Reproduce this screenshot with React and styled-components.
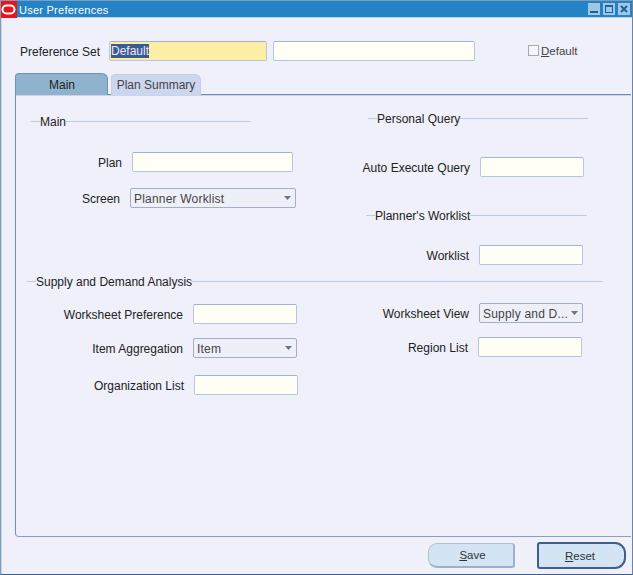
import React from "react";
import styled, { createGlobalStyle } from "styled-components";

const Global = createGlobalStyle`
  html, body { margin: 0; padding: 0; background: #eff0f9; }
  * { box-sizing: border-box; }
`;

const Window = styled.div`
  width: 633px;
  height: 575px;
  display: flex;
  flex-direction: column;
  background: #eff0f9;
  border-top: 1px solid #7f9db9;
  border-left: 1px solid #7f9db9;
  border-right: 1px solid #6f83a3;
  border-bottom: 1px solid #3f5f8a;
  box-shadow: inset 1px 0 #c6d6ec;
  font-family: "Liberation Sans", Arial, sans-serif;
  font-size: 12px;
  line-height: 14px;
  color: #222;
  overflow: hidden;
`;

const TitleBar = styled.div`
  height: 17px;
  margin: 0 -1px;
  background: #2582c4;
  display: flex;
  align-items: center;
  color: #fff;
  border-bottom: 1px solid #bcd4ee;
`;

const Logo = styled.svg`
  width: 17px;
  height: 17px;
  flex: none;
`;

const TitleText = styled.span`
  margin-left: 2px;
  padding-top: 1px;
  flex: 1;
  font-size: 11px;
  letter-spacing: 0.25px;
`;

const WinButtons = styled.div`
  display: flex;
  gap: 3px;
  margin-right: 3px;
`;

const WinButton = styled.svg`
  width: 12px;
  height: 12px;
`;

const PrefRow = styled.div`
  display: flex;
  align-items: center;
  height: 20px;
  margin-top: 23px;
  padding-left: 19px;
`;

const PrefLabel = styled.label`
  width: 79px;
  margin-right: 10px;
  padding-top: 2px;
  white-space: nowrap;
`;

const fieldBox = `
  height: 20px;
  border: 1px solid #b4c6e2;
  border-top-color: #9fb3d2;
  border-radius: 2px;
  outline: none;
  padding: 0 1px;
`;

const PrefField = styled.div`
  ${fieldBox}
  width: ${(p) => p.$w}px;
  background: ${(p) => (p.$required ? "#fdeea5" : "#fffff6")};
  margin-right: 6px;
  display: flex;
  align-items: center;
`;

const Selected = styled.span`
  background: #3c5a92;
  color: #e8ecf8;
`;

const CheckWrap = styled.div`
  display: flex;
  align-items: center;
  margin-left: 47px;
  font-size: 11.5px;
  color: #444;
`;

const CheckBox = styled.span`
  width: 11px;
  height: 11px;
  border: 1px solid #a9a9a9;
  background: #f5f6fb;
  margin-right: 2px;
  margin-top: -2px;
`;

const Tabs = styled.div`
  display: flex;
  gap: 3px;
  margin: 12px 0 0 14px;
  height: 22px;
  position: relative;
  z-index: 1;
`;

const Tab = styled.div`
  width: ${(p) => p.$w}px;
  height: ${(p) => (p.$active ? 22 : 21)}px;
  margin-top: ${(p) => (p.$active ? 0 : 1)}px;
  padding-left: ${(p) => (p.$active ? 1 : 0)}px;
  display: flex;
  align-items: center;
  justify-content: center;
  background: ${(p) => (p.$active ? "#8fb3cd" : "#ccd6ee")};
  border: 1px solid ${(p) => (p.$active ? "#6f93b8" : "#c3cfe9")};
  border-bottom: none;
  border-radius: 4px 6px 0 0;
  color: ${(p) => (p.$active ? "#222" : "#444")};
`;

const Panel = styled.div`
  margin: -1px 0 0 14px;
  width: 616px;
  height: 443px;
  border-left: 1px solid #6f8fb8;
  border-top: 1px solid #6f8fb8;
  border-bottom: 1px solid #8a9fbd;
  border-radius: 0 0 0 4px;
  box-shadow: inset 0 1px #c9d5ea;
`;

const Columns = styled.div`
  display: flex;
`;

const Column = styled.div`
  width: ${(p) => p.$w}px;
  flex: none;
`;

const Heading = styled.div`
  display: flex;
  align-items: center;
  height: 14px;
  width: ${(p) => p.$w}px;
  margin-left: ${(p) => p.$x}px;
  margin-top: ${(p) => p.$top}px;
  &::before, &::after {
    content: "";
    height: 1px;
    background: #bccbe4;
  }
  &::before { width: 9px; }
  &::after { flex: 1; }
`;

const HeadingText = styled.span`
  padding-top: 2px;
`;

const Row = styled.div`
  display: flex;
  align-items: center;
  height: 20px;
  margin-top: ${(p) => p.$top}px;
`;

const RowLabel = styled.label`
  width: ${(p) => p.$end}px;
  margin-right: 10px;
  padding-top: 2px;
  text-align: right;
  white-space: nowrap;
  flex: none;
`;

const Input = styled.div`
  ${fieldBox}
  width: ${(p) => p.$w}px;
  background: #fffff6;
`;

const Select = styled.div`
  ${fieldBox}
  width: ${(p) => p.$w}px;
  border-color: #a3aec4;
  background: #eef0f8;
  display: flex;
  align-items: center;
  padding: 0 3px;
  color: #444;
  justify-content: space-between;
`;

const SelectText = styled.span`
  padding-top: 2px;
  letter-spacing: 0.2px;
`;

const Caret = styled.svg`
  width: 7px;
  height: 4px;
  margin-right: 1px;
  flex: none;
`;

const Footer = styled.div`
  display: flex;
  justify-content: flex-end;
  align-items: center;
  flex: 1;
  padding-right: 6px;
`;

const Button = styled.div`
  display: flex;
  align-items: center;
  justify-content: center;
  width: ${(p) => (p.$default ? 89 : 87)}px;
  height: ${(p) => (p.$default ? 27 : 25)}px;
  margin-left: 22px;
  padding: ${(p) => (p.$default ? "0 3px 0 0" : "0 0 0 3px")};
  background: #d3e5f5;
  border-style: solid;
  border-width: ${(p) => (p.$default ? "2px" : "1px 2px 2px 1px")};
  border-color: ${(p) => (p.$default ? "#3f5f8a" : "#b3c0cc #9fb1c4 #9fb1c4 #b3c0cc")};
  border-radius: ${(p) => (p.$default ? "3px 11px 11px 3px" : "9px 3px 3px 9px")};
  color: #333;
  font-size: 11.5px;
`;

const Mnemonic = styled.span`
  text-decoration: underline;
`;

const Arrow = () => (
  <Caret viewBox="0 0 7 4"><path d="M0 0h7L3.5 4z" fill="#6d7486" /></Caret>
);

export default function App() {
  return (
    <>
      <Global />
      <Window>
        <TitleBar>
          <Logo viewBox="0 0 17 17">
            <rect width="17" height="17" fill="#e8141c" />
            <rect x="2.5" y="4.5" width="12" height="8" rx="4" fill="none" stroke="#fff" strokeWidth="2" />
          </Logo>
          <TitleText>User Preferences</TitleText>
          <WinButtons>
            <WinButton viewBox="0 0 12 12">
              <rect width="12" height="12" fill="#9fc8e6" />
              <rect x="2" y="8" width="8" height="2" fill="#1f5f96" />
            </WinButton>
            <WinButton viewBox="0 0 12 12">
              <rect width="12" height="12" fill="#9fc8e6" />
              <rect x="2.5" y="2.5" width="7" height="7" fill="none" stroke="#1f5f96" />
              <rect x="2" y="2" width="8" height="2" fill="#1f5f96" />
            </WinButton>
            <WinButton viewBox="0 0 12 12">
              <rect width="12" height="12" fill="#9fc8e6" />
              <path d="M3 3l6 6M9 3l-6 6" stroke="#1f5f96" strokeWidth="2" />
            </WinButton>
          </WinButtons>
        </TitleBar>
        <PrefRow>
          <PrefLabel>Preference Set</PrefLabel>
          <PrefField $w={158} $required><Selected>Default</Selected></PrefField>
          <PrefField $w={202} />
          <CheckWrap>
            <CheckBox />
            <span><Mnemonic>D</Mnemonic>efault</span>
          </CheckWrap>
        </PrefRow>
        <Tabs>
          <Tab $w={93} $active>Main</Tab>
          <Tab $w={90}>Plan Summary</Tab>
        </Tabs>
        <Panel>
          <Columns>
            <Column $w={344}>
              <Heading $x={15} $w={220} $top={19}><HeadingText>Main</HeadingText></Heading>
              <Row $top={24}><RowLabel $end={106}>Plan</RowLabel><Input $w={161} /></Row>
              <Row $top={16}>
                <RowLabel $end={104}>Screen</RowLabel>
                <Select $w={166}><SelectText>Planner Worklist</SelectText><Arrow /></Select>
              </Row>
            </Column>
            <Column $w={260}>
              <Heading $x={8} $w={220} $top={16}><HeadingText>Personal Query</HeadingText></Heading>
              <Row $top={32}><RowLabel $end={110}>Auto Execute Query</RowLabel><Input $w={104} /></Row>
              <Heading $x={6} $w={221} $top={31}><HeadingText>Planner's Worklist</HeadingText></Heading>
              <Row $top={23}><RowLabel $end={109}>Worklist</RowLabel><Input $w={104} /></Row>
            </Column>
          </Columns>
          <Heading $x={11} $w={576} $top={9}><HeadingText>Supply and Demand Analysis</HeadingText></Heading>
          <Columns>
            <Column $w={344}>
              <Row $top={16}><RowLabel $end={167}>Worksheet Preference</RowLabel><Input $w={104} /></Row>
              <Row $top={14}>
                <RowLabel $end={167}>Item Aggregation</RowLabel>
                <Select $w={104}><SelectText>Item</SelectText><Arrow /></Select>
              </Row>
              <Row $top={17}><RowLabel $end={168}>Organization List</RowLabel><Input $w={104} /></Row>
            </Column>
            <Column $w={260}>
              <Row $top={15}>
                <RowLabel $end={109}>Worksheet View</RowLabel>
                <Select $w={104}><SelectText>Supply and D...</SelectText><Arrow /></Select>
              </Row>
              <Row $top={14}><RowLabel $end={108}>Region List</RowLabel><Input $w={104} /></Row>
            </Column>
          </Columns>
        </Panel>
        <Footer>
          <Button><span><Mnemonic>S</Mnemonic>ave</span></Button>
          <Button $default><span><Mnemonic>R</Mnemonic>eset</span></Button>
        </Footer>
      </Window>
    </>
  );
}
